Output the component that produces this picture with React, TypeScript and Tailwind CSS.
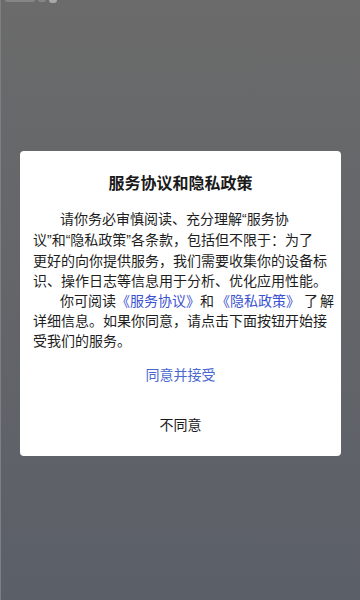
import React from 'react';

const font = { fontFamily: '"Noto Sans CJK SC", "Noto Sans", sans-serif' };

// narrow western quotes, as the original renders them
function Q({ children }: { children: React.ReactNode }) {
  return <span className="font-['Liberation_Sans',sans-serif]">{children}</span>;
}

export default function App() {
  return (
    <div
      style={font}
      className="relative w-[360px] h-[600px] overflow-hidden bg-gradient-to-b from-[#6b6b6b] to-[#5b5f67] border-l border-[#7c7f85]"
    >
      {/* status bar, mostly cropped off the top */}
      <div className="absolute left-[4px] top-0 flex items-start gap-[3px]">
        <div className="w-[30px] h-[2px] rounded-b-sm bg-[#858585]" />
        <div className="w-[8px] h-[2px] rounded-b-sm bg-[#858585]" />
        <div className="w-[8px] h-[3px] rounded-b-sm bg-[#a8a8a8]" />
      </div>

      <div className="flex flex-col pt-[151px] pl-[19px]">
        <div className="w-[321px] h-[305px] bg-white rounded-[4px] flex flex-col">
          <h1 className="pt-[19px] text-center text-[16px] leading-[24px] font-bold text-[#1a1a1a]">
            服务协议和隐私政策
          </h1>

          <div className="mt-[14px] pl-[13px] text-[14px] leading-[20px] text-[#1e1e1e] whitespace-nowrap">
            <div className="pl-[27px]">请你务必审慎阅读、充分理解<Q>“</Q>服务协</div>
            <div>议<Q>”</Q>和<Q>“</Q>隐私政策<Q>”</Q>各条款，包括但不限于：为了</div>
            <div>更好的向你提供服务，我们需要收集你的设备标</div>
            <div>识、操作日志等信息用于分析、优化应用性能。</div>
            <div className="pl-[27px]">
              你可阅读<span className="text-[#3b52d1]">《服务协议》</span>和<span className="text-[#3b52d1] pl-[2px]">《隐私政策》</span><span className="pl-[4px] tracking-[2px]">了解</span>
            </div>
            <div>详细信息。如果你同意，请点击下面按钮开始接</div>
            <div>受我们的服务。</div>
          </div>

          <div className="-mt-[1px] flex flex-col">
            <button className="h-[50px] text-[14px] text-[#4a68cf]">同意并接受</button>
            <button className="h-[50px] text-[14px] text-[#1a1a1a]">不同意</button>
          </div>
        </div>
      </div>
    </div>
  );
}
